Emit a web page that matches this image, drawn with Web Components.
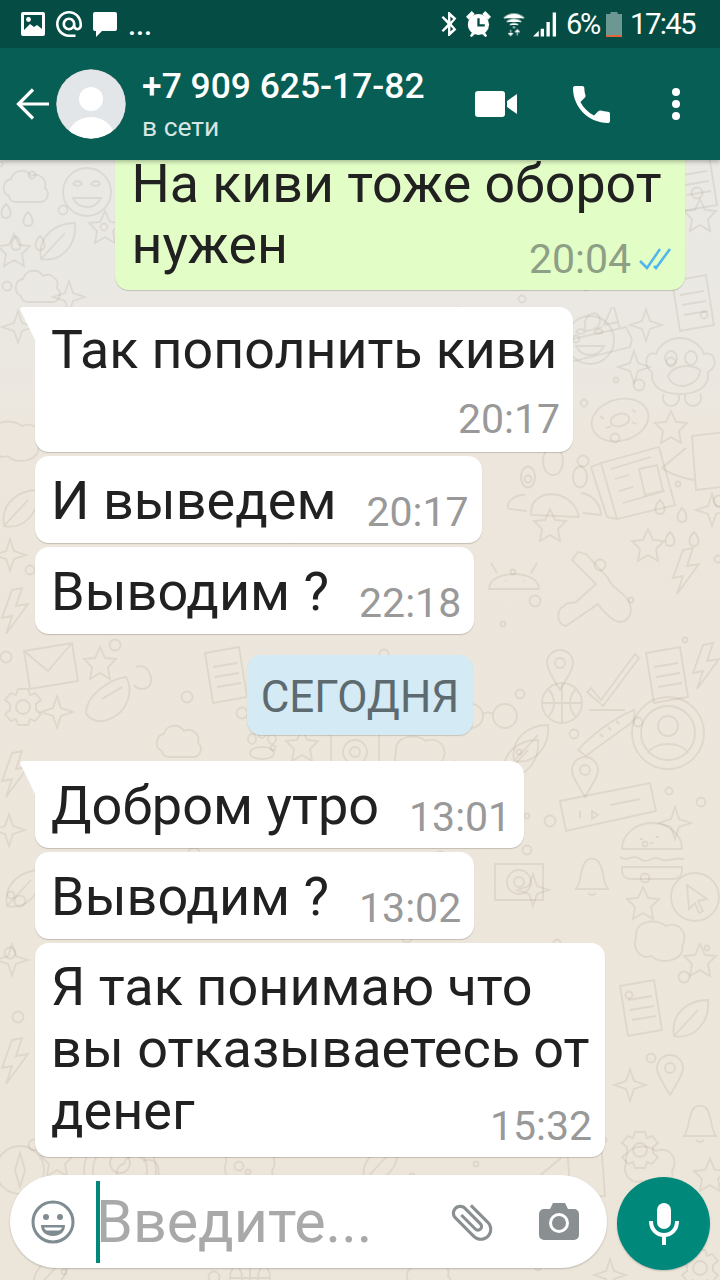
<!doctype html>
<html lang="ru">
<head>
<meta charset="utf-8">
<title>Chat</title>
<style>
  html, body { margin: 0; padding: 0; }
  body { width: 720px; height: 1280px; overflow: hidden; font-family: Roboto, "Noto Sans", sans-serif; }
</style>
</head>
<body>
<chat-screen>
  <status-bar slot="status"></status-bar>
  <chat-header slot="header" title="+7 909 625-17-82" subtitle="в сети"></chat-header>

  <chat-bubble out wide time="20:04" gap="0" style="font-size:53.700px">
    <span slot="lines">На киви тоже оборот</span>нужен
  </chat-bubble>
  <chat-bubble tail stacked time="20:17" gap="17" style="width:538px;font-size:53.700px">
    <span slot="lines">Так пополнить киви</span>
  </chat-bubble>
  <chat-bubble time="20:17" gap="4">И выведем</chat-bubble>
  <chat-bubble time="22:18" gap="4">Выводим ?</chat-bubble>
  <date-chip>СЕГОДНЯ</date-chip>
  <chat-bubble tail time="13:01" gap="26">Добром утро</chat-bubble>
  <chat-bubble time="13:02" gap="4">Выводим ?</chat-bubble>
  <chat-bubble wide time="15:32" gap="4">
    <span slot="lines">Я так понимаю что<br>вы отказываетесь от</span>денег
  </chat-bubble>

  <chat-composer slot="composer" placeholder="Введите..."></chat-composer>
</chat-screen>

<script>
// wallpaper: hand placed doodles plus a scatter of small rings
class ChatWallpaper extends HTMLElement {
  constructor() {
    super();
    this.attachShadow({ mode: 'open' });
  }

  connectedCallback() {
    const doodles = {
      star: 'M0-16 4-4 16 0 4 4 0 16-4 4-16 0-4-4Z',
      star5: 'M0-16 5-5 16-4 8 4 10 16 0 10-10 16-8 4-16-4-5-5Z',
      cloud: 'M-18 6a9 9 0 0 1 2-17 11 11 0 0 1 20-3 10 10 0 0 1 14 12 8 8 0 0 1-4 14H-12a7 7 0 0 1-6-6Z',
      mail: 'M-26-16 22-24 28 14-20 22ZM-26-16-2 4 22-24',
      burger: 'M-30-4a30 26 0 0 1 60 0ZM-32 4c8 6 12-4 20 2s12-4 20 0 12-2 24 0M-30 14h60v4a8 8 0 0 1-8 8h-44a8 8 0 0 1-8-8ZM-12-14h3M4-16h3M-2-10h3',
      monkey: 'M-24-8a26 26 0 0 1 48 0c10-4 16 12 4 18 2 16-12 22-28 22S-30 26-28 10C-38 4-34-12-24-8ZM-15-4a6 7 0 1 0 12 0a6 7 0 1 0-12 0M5-4a6 7 0 1 0 12 0a6 7 0 1 0-12 0M-12 14C-6 2 12 2 20 8 20 18 10 24 2 24-6 24-10 20-12 14ZM-16 32a8 8 0 1 0 14 0M6 32a8 8 0 1 0 14 0',
      donut: 'M-28 0a28 20 -15 1 0 56 0a28 20 -15 1 0-56 0M-9 0a9 6 -15 1 0 18 0a9 6 -15 1 0-18 0M-20-4l4 3M12-10l4 2M-14 8l5-2M16 4l-4-2',
      ring: 'M-36 0a36 36 0 1 0 72 0a36 36 0 1 0-72 0M-27 0a27 27 0 1 0 54 0a27 27 0 1 0-54 0M-10-7a10 10 0 1 0 20 0a10 10 0 1 0-20 0M-20 20c6-12 34-12 40 0',
      note: 'M-20-24 14-30 22 20-12 26ZM-12-10 12-14M-10 0 14-4M-8 10 16 6',
      gear: 'M-5-18H5L7-12 12-14 18-7 13-3V3L18 7 12 14 7 12 5 18H-5L-7 12-12 14-18 7-13 3V-3L-18-7-12-14-7-12ZM-7 0a7 7 0 1 0 14 0a7 7 0 1 0-14 0',
      pin: 'M0 20C-8 6-13 0-13-7a13 13 0 0 1 26 0C13 0 8 6 0 20ZM-5-7a5 5 0 1 0 10 0a5 5 0 1 0-10 0',
      ball: 'M-20 0a20 20 0 1 0 40 0a20 20 0 1 0-40 0M-20 0H20M0-20V20M-14-14C-6-6-6 6-14 14M14-14C6-6 6 6 14 14',
      shoe: 'M-28 20C-16 6 8-12 28-20 30-12 26-6 18-2L-20 26ZM-6 4l3 3M2-3l3 3M10-9l3 3',
      ticket: 'M-46-6 44-24 50 4-40 24ZM-26 4v7M-14 4l6 4-6 4ZM4-2 34-8',
      leaf: 'M-16 16C-20-8 0-20 18-20 20 0 6 20-16 16ZM-16 16 8-10',
      bell: 'M-16 16C-10 8-12-6-6-12a9 9 0 0 1 12 0C12-6 10 8 16 16ZM-4 20a5 5 0 0 0 8 0',
      compass: 'M-24 0a24 24 0 1 0 48 0a24 24 0 1 0-48 0M0-17 5 0 0 17-5 0Z',
      calendar: 'M-32 22-34 8-28 4 26-8 32 4 30 12-26 26ZM-14-4C-20-22 0-28 0-14 0-6-12-4-14-4L2-8M12-28 4-10 18-13M14-28 20-6',
      guitar: 'M-34 36C-44 34-44 20-36 16-32 10-26 14-24 12L-4-6-28-30-22-38-14-36 8-12C12 0 24 0 30 14 34 26 24 36 14 30 8 26 2 20-2 14Z',
      cam: 'M-24-16H24V20H-24ZM-12 2a12 12 0 1 0 24 0a12 12 0 1 0-24 0M-5 2a5 5 0 1 0 10 0a5 5 0 1 0-10 0',
      blob: 'M-24-2C-26-20-4-22 6-14 18-20 30-6 22 6 26 20 0 26-8 16-20 20-28 8-24-2Z',
      news: 'M-34-14 24-30 40 28-18 42ZM-34-14-44-10-28 40-18 42ZM-24-8 16-20M-20 2-6-2M-16 14-2 10M-12 26 30 14M4-8 22-12 28 14 10 18Z',
      people: 'M-12-34a10 14 0 1 0 20 0a10 14 0 1 0-20 0M-34-18a6 9 0 1 0 14 0a6 9 0 1 0-14 0M18-18a6 9 0 1 0 14 0a6 9 0 1 0-14 0M-24 20C-26-8 18-8 24 22ZM-30 0C-44 0-50 10-46 14L-28 16M26-2C40 0 46 12 46 20L28 18',
      drink: 'M-8-24 26-28 30 26-4 30ZM-14-12-38 8C-30 14-18 18-6 20',
      drops: 'M-20-10c-6 6-6 14 0 14s6-8 0-14ZM2-2c-6 6-6 14 0 14s6-8 0-14ZM-10 22c-6 6-6 14 0 14s6-8 0-14ZM14 22c-6 6-6 14 0 14s6-8 0-14Z',
      bolt: 'M-2-20-12 8-2 6-8 24 14-6 2-4 8-22Z',
      droid: 'M-26 14C-26-6 24-6 24 14ZM-18-2-24-12M16-2 22-12M-10 6h1M8 6h1',
      smile: 'M-24 0a24 24 0 1 0 48 0a24 24 0 1 0-48 0M-14-8c3-4 7-4 9 0-2 2-6 3-9 0ZM4-8c3-4 7-4 9 0-2 2-6 3-9 0ZM-14 6C-8 18 8 18 14 6Z',
      check: 'M-24 8-14 20 20-26 24-22-12 26-28 12ZM-26 30H10',
      glasses: 'M-28-4a12 12 0 1 0 24 0a12 12 0 1 0-24 0M6-4a12 12 0 1 0 24 0a12 12 0 1 0-24 0M-4-6c3-2 7-2 10 0',
      cursor: 'M-24 0a24 24 0 1 0 48 0a24 24 0 1 0-48 0M-8-12 12 2 3 4 8 14 4 16 0 6-6 12Z',
      paw: 'M-12 8c0-8 24-8 24 0s-24 8-24 0M-14-6a4 5 0 1 0 8 0a4 5 0 1 0-8 0M-4-12a4 5 0 1 0 8 0a4 5 0 1 0-8 0M6-6a4 5 0 1 0 8 0a4 5 0 1 0-8 0',
      scooter: 'M-34 16C-34-2-10-18 6-20 14-6 8 14-10 22-20 26-30 24-34 16ZM-18 2 2-10M16-30C26-34 34-22 30-12 26-6 16-8 14-12'
    };
    const placed = [
      ['cloud', 27, 190], ['smile', 87, 192], ['drops', 26, 214], ['leaf', 57, 243], ['star5', 105, 227],
      ['star5', 14, 250], ['cloud', 39, 290], ['star', 69, 297], ['star', 18, 327], ['note', 695, 185],
      ['star5', 700, 215],
      ['calendar', 600, 335], ['star', 646, 325], ['monkey', 680, 362], ['star', 634, 367], ['smile', 590, 340],
      ['donut', 620, 420], ['star5', 671, 427], ['note', 692, 305], ['news', 635, 477], ['drink', 700, 460],
      ['drops', 680, 510], ['star5', 648, 545], ['people', 555, 495], ['guitar', 600, 590], ['bolt', 685, 570],
      ['star', 712, 510], ['droid', 515, 575], ['star5', 550, 525], ['leaf', 20, 510], ['blob', 16, 440],
      ['bolt', 14, 610], ['star', 10, 555],
      ['mail', 50, 667], ['star5', 100, 663], ['note', 225, 677], ['scooter', 120, 697], ['gear', 23, 707],
      ['star', 57, 712], ['pin', 560, 670], ['check', 615, 680], ['note', 666, 677], ['bolt', 705, 665],
      ['ball', 562, 703], ['shoe', 606, 730], ['ring', 668, 733], ['glasses', 487, 720], ['paw', 262, 745],
      ['star5', 302, 745], ['cloud', 180, 745], ['blob', 420, 755], ['cam', 355, 750], ['leaf', 530, 745],
      ['pin', 585, 777], ['ticket', 606, 807], ['star', 675, 823], ['burger', 652, 853], ['cam', 519, 880],
      ['bell', 592, 873], ['cursor', 695, 897], ['star', 533, 890], ['star5', 643, 903], ['leaf', 520, 760],
      ['star', 9, 830], ['bolt', 14, 773], ['leaf', 23, 890], ['blob', 660, 940], ['star5', 700, 960],
      ['note', 640, 1010], ['leaf', 690, 1020], ['pin', 670, 1075], ['star', 630, 1085], ['bell', 700, 1120],
      ['gear', 640, 1150], ['star', 12, 960], ['bolt', 14, 1060], ['compass', 20, 1170], ['star5', 57, 1160],
      ['cloud', 140, 1175], ['blob', 250, 1165], ['ring', 120, 1170], ['leaf', 380, 1165], ['drink', 575, 1170],
      ['blob', 650, 1165], ['star5', 710, 1175], ['star', 610, 1275], ['gear', 700, 1268], ['leaf', 50, 1275],
      ['ball', 250, 1278], ['cloud', 430, 1278]
    ];
    const dots = [];
    let seed = 7;
    for (let i = 0; i < 170; i++) {
      seed = (seed * 137 + 61) % 1009;
      const x = (seed * 17) % 720;
      seed = (seed * 137 + 61) % 1009;
      const y = 160 + (seed * 23) % 1120;
      dots.push(`<circle cx="${x}" cy="${y}" r="${2.5 + (seed % 4)}"/>`);
    }
    const shapes = placed.map(([k, x, y]) =>
      `<path d="${doodles[k]}" transform="translate(${x} ${y})"/>`).join('');

    this.shadowRoot.innerHTML = `
      <style>
        :host {
          display: block;
          position: absolute;
          inset: 0;
          background: linear-gradient(#eae9e4 160px, #ebe8e2 350px, #ede6dc 450px, #ece5da 1280px);
        }
        svg { display: block; }
      </style>
      <svg width="720" height="1280" viewBox="0 0 720 1280" fill="none" stroke="#7a6a55" stroke-opacity=".12" stroke-width="1.800">
        ${shapes}${dots.join('')}
      </svg>`;
  }
}

class ChatScreen extends HTMLElement {
  constructor() {
    super();
    this.attachShadow({ mode: 'open' }).innerHTML = `
      <style>
        :host {
          display: flex;
          flex-direction: column;
          position: relative;
          width: 720px;
          height: 1280px;
          overflow: hidden;
        }
        .top { position: relative; z-index: 2; box-shadow: 0 2px 4px rgba(0,0,0,.25); }
        .log {
          position: relative;
          flex: 1;
          min-height: 0;
          display: flex;
          flex-direction: column;
          justify-content: flex-end;
          align-items: flex-start;
          padding: 0 35px 18px;
          overflow: hidden;
        }
        .bottom { position: relative; }
      </style>
      <chat-wallpaper></chat-wallpaper>
      <div class="top"><slot name="status"></slot><slot name="header"></slot></div>
      <div class="log"><slot></slot></div>
      <div class="bottom"><slot name="composer"></slot></div>`;
  }
}

class StatusBar extends HTMLElement {
  constructor() {
    super();
    this.attachShadow({ mode: 'open' }).innerHTML = `
      <style>
        :host {
          display: flex;
          align-items: center;
          height: 48px;
          background: #054d44;
          color: #fff;
          padding: 0 24px 0 21px;
          box-sizing: border-box;
        }
        svg { display: block; flex: none; fill: #fff; }
        .left, .right { display: flex; align-items: center; }
        .left { flex: 1; }
        .more { font-size: 29px; font-weight: 500; line-height: 24px; margin-left: 11px; align-self: flex-end; }
        .pct { font-size: 29px; letter-spacing: -2.200px; margin-left: 9px; width: 34px; white-space: nowrap; }
        .clock { font-size: 29.500px; letter-spacing: -1.700px; margin-left: 8px; width: 66px; white-space: nowrap; }
      </style>
      <div class="left">
        <svg width="24" height="24" viewBox="0 0 24 24">
          <path fill-rule="evenodd" d="M2 0h20a2 2 0 0 1 2 2v20a2 2 0 0 1-2 2H2a2 2 0 0 1-2-2V2a2 2 0 0 1 2-2Zm1 3v15h18V3Z"/>
          <path d="M3 18l6-6 4 3 3-2 5 4v2H3Z"/><circle cx="7.500" cy="7.500" r="2.400"/>
        </svg>
        <svg width="26" height="26" viewBox="2 2 20 20" style="margin-left:11px">
          <path d="M12 2C6.480 2 2 6.480 2 12s4.480 10 10 10h5v-2h-5c-4.340 0-8-3.660-8-8s3.660-8 8-8 8 3.660 8 8v1.430c0 .79-.71 1.570-1.500 1.570s-1.500-.78-1.500-1.570V12c0-2.760-2.240-5-5-5s-5 2.240-5 5 2.240 5 5 5c1.380 0 2.640-.56 3.540-1.470.65.89 1.770 1.470 2.960 1.470 1.970 0 3.500-1.600 3.500-3.570V12c0-5.520-4.480-10-10-10zm0 13c-1.660 0-3-1.340-3-3s1.340-3 3-3 3 1.340 3 3-1.340 3-3 3z"/>
        </svg>
        <svg width="24" height="25" viewBox="0 0 24 25" style="margin-left:11px">
          <path d="M2 0h20a2 2 0 0 1 2 2v15a2 2 0 0 1-2 2H9l-6 6v-6H2a2 2 0 0 1-2-2V2a2 2 0 0 1 2-2Z"/>
        </svg>
        <span class="more">...</span>
      </div>
      <div class="right">
        <svg width="16" height="24" viewBox="0 0 16 24">
          <path d="M7 0h1.400l7 6.400L10.600 12l4.800 5.600-7 6.400H7v-8.400L2.200 20 .6 18.400 6.600 12 .6 5.600 2.200 4 7 8.400Zm2.400 4.600v5.200l2.800-2.800Zm0 9.600v5.200l2.800-2.400Z"/>
        </svg>
        <svg width="25" height="26" viewBox="0 0 26 27" style="margin-left:9px">
          <path d="M0 6 6 0 9 3 3 9ZM26 6 20 0 17 3 23 9ZM4 26l3-5 3 2-4 4ZM22 26l-3-5-3 2 4 4Z"/>
          <circle cx="13" cy="14" r="11"/>
          <path d="M13 7.500V15h6.500" fill="none" stroke="#054d44" stroke-width="2.400"/>
        </svg>
        <svg width="22" height="25" viewBox="0 0 23 25" style="margin-left:12px" fill="none" stroke="#fff" stroke-opacity=".5" stroke-width="2.200">
          <path d="M1 6c6-6 15-6 21 0M4 10c4-4 11-4 15 0M7 13c3-2 6-2 9 0"/>
          <circle cx="11.500" cy="15.500" r="1.500" fill="#fff" fill-opacity=".5" stroke="none"/>
          <path d="M8 18v6M5.500 21.500 8 24l2.500-2.500M15 24v-6M12.500 20.500 15 18l2.500 2.500" stroke-width="1.800"/>
        </svg>
        <svg width="24" height="25" viewBox="0 0 25 25" style="margin-left:8px">
          <path d="M0 25 6 19V25ZM8 17h3.500v8H8ZM14 10h3.500v15H14ZM20.500 0H24v25h-3.500Z"/>
        </svg>
        <span class="pct">6%</span>
        <svg width="16" height="25" viewBox="0 0 16 25" style="margin-left:6px">
          <path d="M4.500 0h7v2H16v21H0V2h4.500Z" fill-opacity=".42"/>
          <rect y="23" width="16" height="2" fill="#e0673a"/>
        </svg>
        <span class="clock">17:45</span>
      </div>`;
  }
}

class ChatHeader extends HTMLElement {
  constructor() {
    super();
    this.attachShadow({ mode: 'open' }).innerHTML = `
      <style>
        :host {
          display: flex;
          align-items: center;
          height: 112px;
          background: #075e54;
          color: #fff;
          box-sizing: border-box;
          padding-left: 16px;
        }
        svg { display: block; flex: none; }
        .avatar { margin-left: 7px; border-radius: 50%; }
        .who { margin-left: 16px; width: 333px; }
        .title { font-size: 35.400px; font-weight: 500; line-height: 40px; white-space: nowrap; }
        .sub { font-size: 26.400px; line-height: 30px; margin-top: 6px; color: #d7e6e3; }
      </style>
      <svg width="33" height="32" viewBox="0 0 33 32" fill="none" stroke="#fff" stroke-width="3.200">
        <path d="M33 16H3M17 1.500 2.500 16 17 30.500"/>
      </svg>
      <svg class="avatar" width="70" height="70" viewBox="0 0 70 70">
        <defs><clipPath id="c"><circle cx="35" cy="35" r="34.500"/></clipPath></defs>
        <circle cx="35" cy="35" r="35" fill="#9aa3a4"/>
        <circle cx="35" cy="35" r="34.500" fill="#e2e6e9"/>
        <circle cx="35" cy="30" r="12" fill="#fff"/>
        <ellipse cx="35" cy="70" rx="24" ry="22" fill="#fff" clip-path="url(#c)"/>
      </svg>
      <div class="who">
        <div class="title" id="t"></div>
        <div class="sub" id="s"></div>
      </div>
      <svg width="42" height="26" viewBox="0 0 42 26" fill="#fff">
        <rect width="30" height="26" rx="3"/><path d="M32 10 42 3V23L32 16Z"/>
      </svg>
      <svg width="37" height="37" viewBox="3 3 18 18" fill="#fff" style="margin-left:56px">
        <path d="M6.620 10.790c1.440 2.830 3.760 5.140 6.590 6.590l2.200-2.200c.27-.27.67-.36 1.020-.24 1.120.37 2.330.57 3.570.57.55 0 1 .45 1 1V20c0 .55-.45 1-1 1-9.390 0-17-7.610-17-17 0-.55.45-1 1-1h3.500c.55 0 1 .45 1 1 0 1.250.2 2.450.57 3.570.11.35.03.74-.25 1.020l-2.200 2.200z"/>
      </svg>
      <svg width="10" height="34" viewBox="0 0 10 34" fill="#fff" style="margin-left:61px">
        <circle cx="5" cy="5" r="4"/><circle cx="5" cy="17" r="4"/><circle cx="5" cy="29" r="4"/>
      </svg>`;
    this.shadowRoot.getElementById('t').textContent = this.getAttribute('title');
    this.shadowRoot.getElementById('s').textContent = this.getAttribute('subtitle');
  }
}

class ChatBubble extends HTMLElement {
  constructor() {
    super();
    this.attachShadow({ mode: 'open' }).innerHTML = `
      <style>
        :host {
          display: block;
          position: relative;
          flex: none;
          box-sizing: border-box;
          background: #fff;
          border-radius: 14px;
          box-shadow: 0 1px 1px rgba(0,0,0,.18);
          padding: 14px 13px 12px 16px;
          color: #212121;
          font-size: 54px;
          line-height: 61px;
          white-space: nowrap;
        }
        :host([wide]) { width: 570px; padding-top: 13px; line-height: 62px; }
        :host([wide]) .text { padding-bottom: 3px; }
        :host([out]) { background: #e2fdc6; align-self: flex-end; padding-left: 16.500px; padding-right: 14px; line-height: 61px; }
        :host([tail]) { border-top-left-radius: 0; }
        :host([tail])::before {
          content: "";
          position: absolute;
          left: -15px;
          top: 0;
          width: 15px;
          height: 33px;
          background: #fff;
          clip-path: polygon(2px 0, 100% 0, 100% 100%, 0 2px);
        }
        :host([stacked]) { padding-top: 12px; padding-bottom: 14px; }
        .lines { display: block; }
        .last { display: flex; justify-content: space-between; align-items: flex-end; }
        .meta {
          display: flex;
          align-items: center;
          margin-left: auto;
          padding-left: 30px;
          font-size: 41px;
          line-height: 38px;
          color: #999;
        }
        :host([out]) .meta { color: #8f9f86; }
        :host([stacked]) .meta { margin-top: 20px; }
        svg { display: none; margin-left: 8px; flex: none; }
        :host([out]) svg { display: block; }
      </style>
      <slot name="lines" class="lines"></slot>
      <div class="last">
        <span class="text"><slot></slot></span>
        <span class="meta"><span id="time"></span>
          <svg width="32" height="24" viewBox="0 0 32 24" fill="none" stroke="#4fb6ec" stroke-width="2.500">
            <path d="M1 14l7 7L21 2M15 19l2 2L31 2"/>
          </svg>
        </span>
      </div>`;
  }

  connectedCallback() {
    this.shadowRoot.getElementById('time').textContent = this.getAttribute('time');
    this.style.marginTop = (this.getAttribute('gap') || 0) + 'px';
  }
}

class DateChip extends HTMLElement {
  constructor() {
    super();
    this.attachShadow({ mode: 'open' }).innerHTML = `
      <style>
        :host {
          display: block;
          flex: none;
          align-self: center;
          margin-top: 21px;
          box-sizing: border-box;
          height: 80px;
          padding: 0 14px;
          background: #d4eaf4;
          border-radius: 14px;
          box-shadow: 0 1px 1px rgba(0,0,0,.15);
          color: #5d6a70;
          font-size: 44px;
          line-height: 84px;
        }
      </style>
      <slot></slot>`;
  }
}

class ChatComposer extends HTMLElement {
  constructor() {
    super();
    this.attachShadow({ mode: 'open' }).innerHTML = `
      <style>
        :host {
          display: flex;
          align-items: flex-start;
          height: 105px;
          box-sizing: border-box;
          padding: 0 10px;
        }
        svg { display: block; flex: none; }
        .field {
          display: flex;
          align-items: center;
          width: 597px;
          height: 93px;
          box-sizing: border-box;
          padding-left: 21px;
          background: #fff;
          border-radius: 46.500px;
          box-shadow: 0 1px 2px rgba(0,0,0,.2);
        }
        .caret { flex: none; width: 4px; height: 82px; margin-left: 21px; background: #00897b; }
        .hint { flex: 1; margin-left: -4px; font-size: 59.200px; color: #a9a9a9; white-space: nowrap; }
        .mic {
          display: flex;
          align-items: center;
          justify-content: center;
          width: 93px;
          height: 93px;
          margin: 2px 0 0 10px;
          background: #00897b;
          border-radius: 50%;
          box-shadow: 0 1px 2px rgba(0,0,0,.2);
        }
      </style>
      <div class="field">
        <svg width="44" height="44" viewBox="0 0 44 44">
          <circle cx="22" cy="22" r="20" fill="none" stroke="#7f8c92" stroke-width="3"/>
          <circle cx="15" cy="17" r="3" fill="#7f8c92"/><circle cx="29" cy="17" r="3" fill="#7f8c92"/>
          <path d="M10 25h24c0 7-5 11-12 11s-12-4-12-11Z" fill="#7f8c92"/>
          <path d="M13 27.500h18c-.5 1.500-1.500 2.500-3 3H16c-1.500-.5-2.500-1.500-3-3Z" fill="#fff"/>
        </svg>
        <div class="caret"></div>
        <div class="hint" id="hint"></div>
        <svg width="50" height="50" viewBox="0 0 24 24" fill="#8a8f91" style="margin-right:42px">
          <g transform="rotate(-45 12 12)"><path d="M16.500 6v11.500c0 2.210-1.790 4-4 4s-4-1.790-4-4V5c0-1.380 1.120-2.500 2.500-2.500s2.500 1.120 2.500 2.500v10.500c0 .55-.45 1-1 1s-1-.45-1-1V6H10v9.500c0 1.380 1.120 2.500 2.500 2.500s2.500-1.120 2.500-2.500V5c0-2.210-1.790-4-4-4S7 2.790 7 5v12.500c0 3.040 2.460 5.500 5.500 5.500s5.500-2.460 5.500-5.500V6h-1.500z"/></g>
        </svg>
        <svg width="40" height="37" viewBox="0 0 40 37" style="margin-right:28px">
          <path d="M5 6h6l3-6h12l3 6h6a5 5 0 0 1 5 5v21a5 5 0 0 1-5 5H5a5 5 0 0 1-5-5V11a5 5 0 0 1 5-5Z" fill="#8a8f91"/>
          <circle cx="20" cy="20" r="10" fill="#fff"/><circle cx="20" cy="20" r="7" fill="#8a8f91"/>
        </svg>
      </div>
      <div class="mic">
        <svg width="30" height="42" viewBox="0 0 30 42" fill="none" stroke="#fff">
          <rect x="8" y="0" width="14" height="26" rx="7" fill="#fff" stroke="none"/>
          <path d="M2 18c0 9 6 14 13 14s13-5 13-14" stroke-width="4"/>
          <path d="M15 31v11" stroke-width="4"/>
        </svg>
      </div>`;
    this.shadowRoot.getElementById('hint').textContent = this.getAttribute('placeholder');
  }
}

customElements.define('chat-wallpaper', ChatWallpaper);
customElements.define('chat-screen', ChatScreen);
customElements.define('status-bar', StatusBar);
customElements.define('chat-header', ChatHeader);
customElements.define('chat-bubble', ChatBubble);
customElements.define('date-chip', DateChip);
customElements.define('chat-composer', ChatComposer);
</script>
</body>
</html>
